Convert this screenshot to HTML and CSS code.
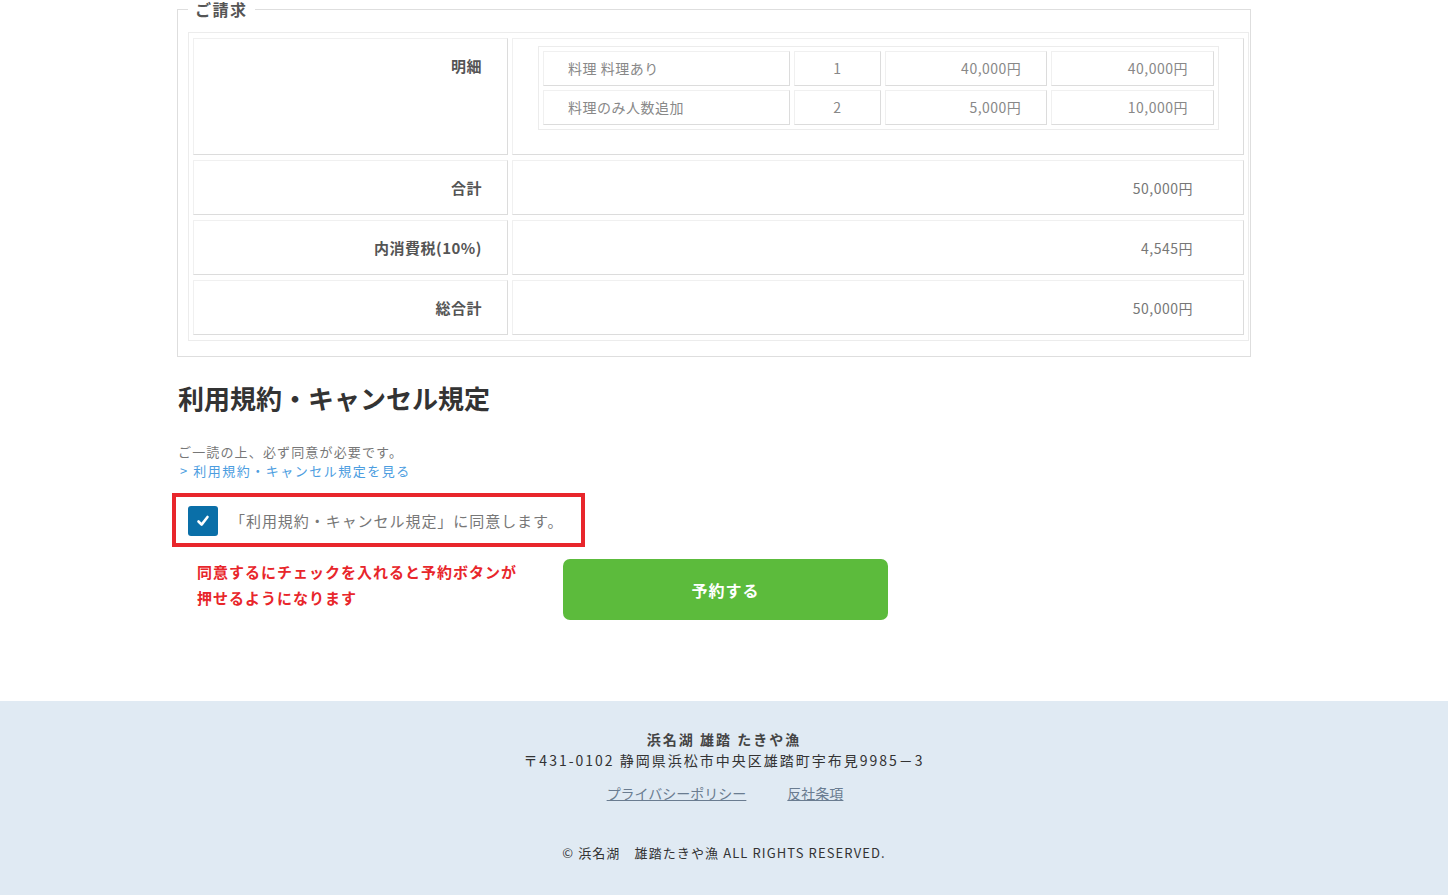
FILE: index.html
```html
<!DOCTYPE html>
<html lang="ja">
<head>
<meta charset="utf-8">
<title>ご請求</title>
<link rel="stylesheet" href="styles.css">
</head>
<body>
<div class="main">
  <fieldset class="bill">
    <legend class="bill-legend">ご請求</legend>
    <table class="bill-table">
      <tr>
        <th class="bill-th">明細</th>
        <td class="bill-detail">
          <table class="items">
            <tr>
              <td class="it-name">料理 料理あり</td>
              <td class="it-qty">1</td>
              <td class="it-price">40,000円</td>
              <td class="it-sum">40,000円</td>
            </tr>
            <tr>
              <td class="it-name">料理のみ人数追加</td>
              <td class="it-qty">2</td>
              <td class="it-price">5,000円</td>
              <td class="it-sum">10,000円</td>
            </tr>
          </table>
        </td>
      </tr>
      <tr>
        <th class="bill-th">合計</th>
        <td class="bill-val">50,000円</td>
      </tr>
      <tr>
        <th class="bill-th">内消費税(10%)</th>
        <td class="bill-val">4,545円</td>
      </tr>
      <tr>
        <th class="bill-th">総合計</th>
        <td class="bill-val">50,000円</td>
      </tr>
    </table>
  </fieldset>

  <h2 class="terms-title">利用規約・キャンセル規定</h2>
  <p class="terms-desc">ご一読の上、必ず同意が必要です。<br><a class="terms-link" href="#">&gt; 利用規約・キャンセル規定を見る</a></p>

  <div class="agree-box">
    <label class="agree">
      <span class="checkbox">
        <svg width="14" height="14" viewBox="0 0 14 14"><polyline points="2.5,7.5 5.6,10.6 11.5,3" fill="none" stroke="#fff" stroke-width="2.6" stroke-linecap="round" stroke-linejoin="round"/></svg>
      </span>
      <span class="agree-text">「利用規約・キャンセル規定」に同意します。</span>
    </label>
  </div>

  <div class="submit-row">
    <p class="note">同意するにチェックを入れると予約ボタンが<br>押せるようになります</p>
    <button class="reserve-btn" type="button">予約する</button>
  </div>
</div>

<footer class="footer">
  <p class="f-name">浜名湖 雄踏 たきや漁</p>
  <p class="f-addr">〒431-0102 静岡県浜松市中央区雄踏町宇布見9985－3</p>
  <p class="f-links"><a href="#" class="f-link">プライバシーポリシー</a><a href="#" class="f-link">反社条項</a></p>
  <p class="f-copy">© 浜名湖　雄踏たきや漁 ALL RIGHTS RESERVED.</p>
</footer>
</body>
</html>
```

FILE: styles.css
```css
html, body {
  margin: 0;
  padding: 0;
  background: #fff;
}
body {
  font-family: "Noto Sans CJK JP", "Noto Sans", sans-serif;
  color: #333;
}
.main {
  width: 1074px;
  margin-left: calc(50% - 547px);
  padding-bottom: 81px;
}
.bill {
  margin: 0;
  padding: 14px 0 15px 10px;
  border: 1px solid #dedede;
  box-sizing: border-box;
  width: 1074px;
}
.bill-legend {
  padding: 0 7px;
  font-size: 16px;
  line-height: 18px;
  font-weight: bold;
  color: #555;
  letter-spacing: 1.5px;
}
.bill-table {
  border-collapse: separate;
  border-spacing: 4px 5px;
  border: 1px solid #ececec;
}
.bill-th, .bill-val, .bill-detail {
  border: 1px solid;
  border-color: #f0f0f0 #dcdcdc #dcdcdc #f0f0f0;
}
.bill-th {
  width: 288px;
  padding: 17px 25px 16px 0;
  text-align: right;
  vertical-align: top;
  font-size: 15px;
  line-height: 20px;
  font-weight: bold;
  color: #555;
  letter-spacing: 0.5px;
}
.bill-val {
  width: 680px;
  padding: 17px 50px 16px 0;
  text-align: right;
  vertical-align: top;
  font-size: 14px;
  line-height: 20px;
  color: #777;
  letter-spacing: 0.5px;
}
.bill-detail {
  padding: 7px 24px 24px 25px;
  vertical-align: top;
}
.items {
  border-collapse: separate;
  border-spacing: 4px 4px;
  border: 1px solid #ececec;
}
.items td {
  border: 1px solid;
  border-color: #f0f0f0 #dcdcdc #dcdcdc #f0f0f0;
  padding: 7px 0 8px;
  font-size: 14px;
  line-height: 18px;
  color: #888;
  letter-spacing: 0.5px;
}
.items .it-name { width: 222px; padding-left: 24px; }
.items .it-qty { width: 85px; text-align: center; }
.items .it-price { width: 136px; padding-right: 25px; text-align: right; }
.items .it-sum { width: 136px; padding-right: 25px; text-align: right; }

.terms-title {
  margin: 22px 0 0 1px;
  font-size: 26px;
  line-height: 38px;
  font-weight: bold;
  color: #333;
}
.terms-desc {
  margin: 25px 0 0 1px;
  font-size: 13px;
  line-height: 19px;
  color: #777;
  letter-spacing: 1.15px;
}
.terms-link {
  color: #4c9ddf;
  text-decoration: none;
  margin-left: 2px;
  letter-spacing: 1.5px;
}
.agree-box {
  display: inline-block;
  margin: 13px 0 0 -5px;
  border: 4px solid #e8262b;
  padding: 9px 18px 7px 12px;
}
.agree {
  display: flex;
  align-items: center;
  gap: 12px;
}
.checkbox {
  width: 30px;
  height: 30px;
  border-radius: 3px;
  background: #0a6fa8;
  display: flex;
  align-items: center;
  justify-content: center;
}
.agree-text {
  font-size: 15px;
  line-height: 22px;
  color: #777;
  letter-spacing: 0.95px;
}
.submit-row {
  display: flex;
  align-items: flex-start;
  margin-top: 12px;
}
.note {
  width: 366px;
  margin: 0 0 0 20px;
  font-size: 15px;
  line-height: 26px;
  font-weight: bold;
  color: #e8262b;
  letter-spacing: 1px;
}
.reserve-btn {
  width: 325px;
  height: 61px;
  border: none;
  border-radius: 7px;
  background: #5cbb3c;
  color: #fff;
  font-family: "Noto Sans CJK JP", "Noto Sans", sans-serif;
  font-size: 16px;
  font-weight: bold;
  letter-spacing: 1px;
  padding: 0;
}
.footer {
  background: #e0eaf3;
  text-align: center;
  padding: 28px 0 32px;
  color: #333;
}
.footer p { margin: 0; }
.f-name {
  font-size: 14px;
  line-height: 21px;
  font-weight: bold;
  letter-spacing: 2px;
  color: #444;
}
.f-addr {
  font-size: 14px;
  line-height: 21px;
  letter-spacing: 2px;
  color: #333;
}
.f-links {
  margin-top: 12px !important;
  font-size: 14px;
  line-height: 21px;
  display: flex;
  justify-content: center;
  gap: 41px;
  padding-left: 2px;
}
.f-link {
  color: #6a7c90;
  text-decoration: underline;
}
.f-copy {
  margin-top: 38px !important;
  font-size: 13px;
  line-height: 21px;
  letter-spacing: 1.1px;
  color: #333;
}
```
